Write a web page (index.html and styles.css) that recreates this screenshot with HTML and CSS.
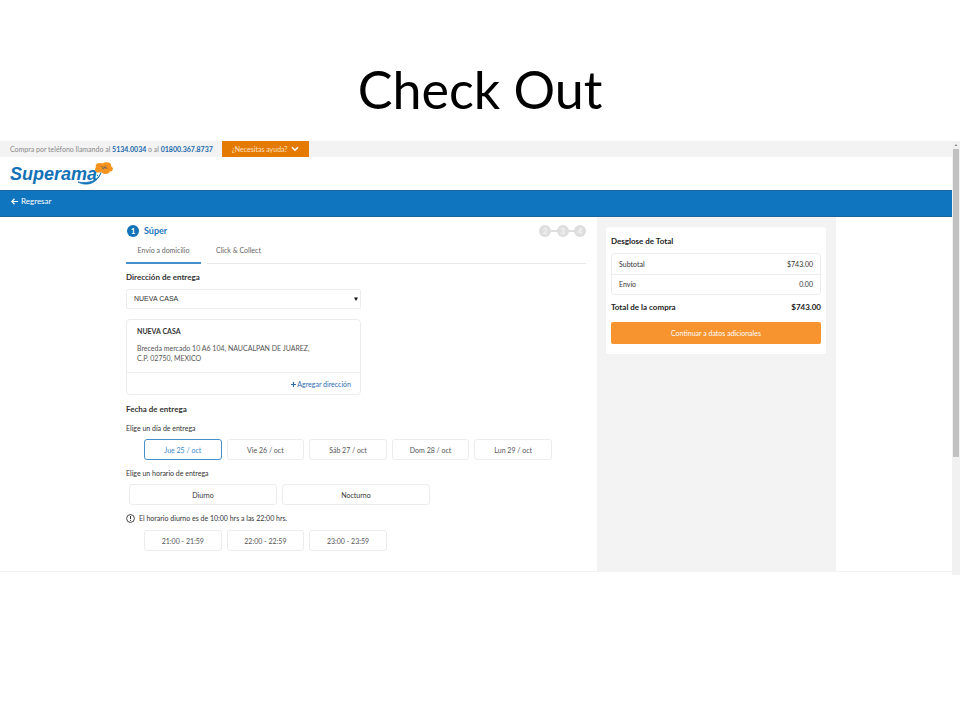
FILE: index.html
```
<!DOCTYPE html>
<html lang="es">
<head>
<meta charset="utf-8">
<meta name="viewport" content="width=device-width, initial-scale=1">
<title>Check Out</title>
<link rel="stylesheet" href="styles.css">
</head>
<body>
<h1 class="slide-title">Check Out</h1>
<div class="browser">
  <div class="page">
    <div class="topbar">
      <p class="phones">Compra por teléfono llamando al <a href="#">5134.0034</a> o al <a href="#">01800.367.8737</a></p>
      <button class="help" type="button">¿Necesitas ayuda?
        <svg viewBox="0 0 8 6" width="8" height="6" aria-hidden="true"><path d="M1 1.2 4 4.2 7 1.2" fill="none" stroke="#fff" stroke-width="1.6"/></svg>
      </button>
    </div>
    <header class="brand">
      <a class="logo" href="#" aria-label="Superama">
        <span class="logo-text">Superama</span>
        <svg class="logo-flower" viewBox="0 0 38 25" width="38" height="25" aria-hidden="true">
          <path d="M2 20C10 24.500 21 22 25 10.500 22.500 19 12 22 2 20z" fill="#1272b8" stroke="#1272b8" stroke-width=".8"/>
          <g fill="#f7941e">
            <ellipse cx="24" cy="4.500" rx="4.400" ry="3.400"/>
            <ellipse cx="30.500" cy="3.500" rx="4.600" ry="3.200"/>
            <ellipse cx="33" cy="6.800" rx="3.900" ry="2.900"/>
            <ellipse cx="29.500" cy="9.300" rx="4" ry="2.600"/>
            <ellipse cx="22.800" cy="7.800" rx="3.800" ry="2.800"/>
          </g>
          <path d="M25 4.500 31.500 6.500M29.500 3.500 27.500 7.500M26 7l5-2" fill="none" stroke="#7d6a50" stroke-width=".8"/>
          <circle cx="21.500" cy="13.500" r=".7" fill="#1272b8"/>
        </svg>
      </a>
    </header>
    <nav class="backbar">
      <a href="#"><svg viewBox="0 0 8 8" width="7" height="7" aria-hidden="true"><path d="M4 .8.900 4 4 7.200M1 4h7" fill="none" stroke="#fff" stroke-width="1.400"/></svg>Regresar</a>
    </nav>
    <main class="checkout">
      <section class="delivery">
        <div class="steps">
          <h2 class="step-current"><span class="dot dot-active">1</span>Súper</h2>
          <ol class="step-list">
            <li class="dot">2</li>
            <li class="dot">3</li>
            <li class="dot">4</li>
          </ol>
        </div>
        <div class="tabs" role="tablist">
          <button class="tab tab-active" type="button" role="tab" aria-selected="true">Envío a domicilio</button>
          <button class="tab" type="button" role="tab" aria-selected="false">Click &amp; Collect</button>
        </div>

        <h3><label for="address">Dirección de entrega</label></h3>
        <div class="select-wrap">
          <select id="address" class="address-select">
            <option>NUEVA CASA</option>
          </select>
          <svg class="select-arrow" viewBox="0 0 4 4" width="4" height="4" aria-hidden="true"><path d="M0 .5h4L2 4z" fill="#111"/></svg>
        </div>
        <article class="address-card">
          <div class="address-body">
            <h4>NUEVA CASA</h4>
            <p>Breceda mercado 10 A6 104, NAUCALPAN DE JUAREZ,<br>C.P. 02750, MEXICO</p>
          </div>
          <div class="address-actions">
            <a href="#"><svg viewBox="0 0 5 5" width="5" height="5" aria-hidden="true"><path d="M2.500 0v5M0 2.500h5" stroke="#2b6cb0" stroke-width="1.200"/></svg>Agregar dirección</a>
          </div>
        </article>

        <h3>Fecha de entrega</h3>
        <p class="hint">Elige un día de entrega</p>
        <div class="slots">
          <button class="choice choice-active" type="button">Jue 25 / oct</button>
          <button class="choice" type="button">Vie 26 / oct</button>
          <button class="choice" type="button">Sáb 27 / oct</button>
          <button class="choice" type="button">Dom 28 / oct</button>
          <button class="choice" type="button">Lun 29 / oct</button>
        </div>
        <p class="hint">Elige un horario de entrega</p>
        <div class="shifts">
          <button class="choice choice-dark" type="button">Diurno</button>
          <button class="choice choice-dark" type="button">Nocturno</button>
        </div>
        <p class="note"><svg viewBox="0 0 9 9" width="9" height="9" aria-hidden="true"><circle cx="4.500" cy="4.500" r="3.900" fill="none" stroke="#333" stroke-width=".9"/><path d="M4.500 2v3M4.500 5.900v1" stroke="#333" stroke-width="1"/></svg>El horario diurno es de 10:00 hrs a las 22:00 hrs.</p>
        <div class="slots">
          <button class="choice" type="button">21:00 - 21:59</button>
          <button class="choice" type="button">22:00 - 22:59</button>
          <button class="choice" type="button">23:00 - 23:59</button>
        </div>
      </section>
      <aside class="summary">
        <div class="summary-card">
          <h3>Desglose de Total</h3>
          <table class="breakdown">
            <tbody>
              <tr><th scope="row">Subtotal</th><td>$743.00</td></tr>
              <tr><th scope="row">Envío</th><td>0.00</td></tr>
            </tbody>
          </table>
          <p class="total"><span>Total de la compra</span><span>$743.00</span></p>
          <button class="continue" type="button">Continuar a datos adicionales</button>
        </div>
      </aside>
    </main>
  </div>
  <div class="scrollbar" aria-hidden="true">
    <svg viewBox="0 0 8 8" width="8" height="8"><path d="m2.500 5 1.500-2 1.500 2z" fill="#888"/></svg>
    <div class="thumb"></div>
  </div>
</div>
</body>
</html>
```
FILE: styles.css
```
* {
  box-sizing: border-box;
}

body,
h1,
h2,
h3,
h4,
p,
ol {
  margin: 0;
  padding: 0;
}

body {
  background: #fff;
  color: #333;
  font: 7px/10px Lato, "Liberation Sans", sans-serif;
}

a {
  color: inherit;
  text-decoration: none;
}

button,
select {
  margin: 0;
  padding: 0;
  border: 0;
  background: none;
  color: inherit;
  font: inherit;
}

.slide-title {
  padding: 57px 0 20px;
  color: #000;
  font-size: 52px;
  font-weight: 400;
  line-height: 64px;
  text-align: center;
}

.browser {
  display: flex;
}

.page {
  flex: 1;
  padding-bottom: 3px;
}

.topbar {
  display: flex;
  background: #f3f3f3;
}

.phones {
  padding: 3px 9px 3px 10px;
  color: #888;
}

.phones a {
  color: #1a69ab;
  font-weight: 700;
}

.help {
  display: flex;
  align-items: center;
  gap: 3px;
  padding: 3px 10px;
  background: #e57a00;
  color: #fbe3c8;
}

.brand {
  padding: 5px 10px;
}

.logo {
  display: inline-flex;
  position: relative;
  height: 23px;
  vertical-align: top;
}

.logo-text {
  color: #1272b8;
  font: italic 700 18px/24px "Liberation Sans", sans-serif;
}

.logo-flower {
  position: absolute;
  top: 0;
  left: 66px;
}

.backbar {
  padding: 5px 11px 10px;
  border-top: 1px solid #1b659f;
  border-bottom: 1px solid #1b659f;
  background: #1075bf;
  color: #fff;
  font-size: 8px;
}

.backbar a {
  display: inline-flex;
  align-items: center;
  gap: 3px;
  vertical-align: top;
}

.checkout {
  display: grid;
  grid-template-columns: 1fr 239px;
  padding: 0 116px 0 126px;
  border-bottom: 1px solid #f3f3f3;
}

.delivery {
  padding: 8px 11px 20px 0;
}

.steps {
  display: flex;
  justify-content: space-between;
  align-items: center;
}

.step-current {
  display: flex;
  align-items: center;
  gap: 5px;
  color: #1b75bc;
  font-size: 9px;
  line-height: 12px;
}

.dot {
  width: 12px;
  height: 12px;
  border-radius: 50%;
  background: #dedede;
  color: #f4f4f4;
  font-size: 8px;
  font-weight: 700;
  line-height: 12px;
  text-align: center;
}

.dot-active {
  margin-left: 1px;
  background: #1272b8;
  color: #fff;
}

.step-list {
  display: flex;
  align-items: center;
  justify-content: space-between;
  width: 47px;
  background: linear-gradient(#dedede, #dedede) center / 100% 2px no-repeat;
  list-style: none;
}

.tabs {
  display: flex;
  gap: 6px;
  margin-bottom: 7px;
}

.tab {
  height: 27px;
  padding: 0 9px 1px;
  border-bottom: 1px solid #e8e8e8;
  color: #666;
  text-align: left;
}

.tab:last-child {
  flex: 1;
}

.tab-active {
  width: 75px;
  padding: 0;
  border-bottom: 2px solid #4590cc;
  text-align: center;
}

h3 {
  font-size: 8px;
  line-height: 12px;
}

.select-wrap {
  position: relative;
  width: 235px;
  margin: 6px 0 10px;
}

.address-select {
  display: block;
  width: 100%;
  height: 20px;
  padding: 0 7px;
  border: 1px solid #ececec;
  border-radius: 2px;
  appearance: none;
  font-family: "Liberation Sans", sans-serif;
}

.select-arrow {
  position: absolute;
  top: 8px;
  right: 3px;
  pointer-events: none;
}

.address-card {
  width: 235px;
  margin-bottom: 8px;
  border: 1px solid #ececec;
  border-radius: 4px;
}

.address-body {
  padding: 6px 10px 9px;
  color: #555;
}

.address-body h4 {
  margin-bottom: 7px;
  color: #333;
  font-size: 7px;
  line-height: 10px;
}

.address-actions {
  padding: 6px 9px 5px;
  border-top: 1px solid #ececec;
  color: #2b6cb0;
  text-align: right;
}

.address-actions a {
  display: inline-flex;
  align-items: center;
  gap: 1px;
  vertical-align: top;
}

.hint {
  margin: 8px 0 6px;
}

.slots,
.shifts {
  display: grid;
  gap: 5px;
}

.slots {
  grid-template-columns: repeat(5, 1fr);
  max-width: 426px;
  padding-left: 18px;
}

.shifts {
  grid-template-columns: repeat(2, 148px);
  padding-left: 3px;
}

.choice {
  height: 21px;
  border: 1px solid #ececec;
  border-radius: 3px;
  color: #555;
}

.choice-dark {
  color: #333;
}

.choice-active {
  border-color: #4590cc;
  color: #3c8ac8;
}

.note {
  display: flex;
  align-items: center;
  gap: 4px;
  margin: 8px 0 7px;
}

.summary {
  padding: 10px 10px 10px 9px;
  background: #f3f3f3;
}

.summary-card {
  padding: 8px 5px 10px;
  border-radius: 3px;
  background: #fff;
}

.breakdown {
  width: 100%;
  margin: 6px 0;
  border: 1px solid #ececec;
  border-radius: 3px;
  border-spacing: 0;
}

.breakdown th,
.breakdown td {
  height: 20px;
  padding: 0 7px 1px;
  font-weight: 400;
  text-align: left;
}

.breakdown td {
  text-align: right;
}

.breakdown tr + tr > * {
  border-top: 1px solid #ececec;
}

.total {
  display: flex;
  justify-content: space-between;
  margin-bottom: 9px;
  color: #222;
  font-size: 8px;
  font-weight: 700;
  line-height: 12px;
}

.summary h3 {
  color: #222;
}

.continue {
  width: 100%;
  height: 22px;
  border-radius: 2px;
  background: #f7942f;
  color: #fff;
}

.scrollbar {
  display: flex;
  flex-direction: column;
  width: 8px;
  background: #f1f1f1;
}

.thumb {
  height: 71%;
  margin: 0 1px;
  background: #c1c1c1;
}
```
